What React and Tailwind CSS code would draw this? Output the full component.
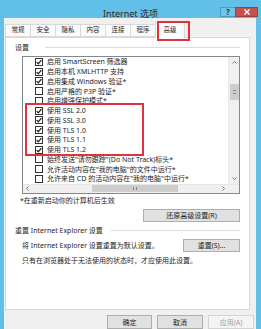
import React from 'react';

const items = [
  { label: '启用 SmartScreen 筛选器', checked: true },
  { label: '启用本机 XMLHTTP 支持', checked: true },
  { label: '启用集成 Windows 验证*', checked: true },
  { label: '启用严格的 P3P 验证*', checked: false },
  { label: '启用增强保护模式*', checked: false },
  { label: '使用 SSL 2.0', checked: true },
  { label: '使用 SSL 3.0', checked: true },
  { label: '使用 TLS 1.0', checked: true },
  { label: '使用 TLS 1.1', checked: true },
  { label: '使用 TLS 1.2', checked: true },
  { label: '始终发送"请勿跟踪"(Do Not Track)标头*', checked: false },
  { label: '允许活动内容在"我的电脑"的文件中运行*', checked: false },
  { label: '允许来自 CD 的活动内容在"我的电脑"中运行*', checked: false },
];

const tabs = ['常规', '安全', '隐私', '内容', '连接', '程序'];

const Checkbox = ({ checked }) => (
  <div className="w-[8px] h-[8px] border border-[#333] bg-white flex items-center justify-center shrink-0">
    {checked && (
      <svg width="6" height="6" viewBox="0 0 6 6">
        <path d="M0.6 3.1 L2.3 4.8 L5.4 1.1" fill="none" stroke="#222" strokeWidth="1.3" />
      </svg>
    )}
  </div>
);

const Arrow = ({ dir }) => {
  const d = {
    up: 'M1.5 4.5 L3.5 2.5 L5.5 4.5',
    down: 'M1.5 2.5 L3.5 4.5 L5.5 2.5',
    left: 'M4.5 1.5 L2.5 3.5 L4.5 5.5',
    right: 'M2.5 1.5 L4.5 3.5 L2.5 5.5',
  }[dir];
  return (
    <svg width="7" height="7" viewBox="0 0 7 7">
      <path d={d} fill="none" stroke="#7a7a7a" strokeWidth="1" />
    </svg>
  );
};

const GroupTitle = ({ children, lineStart }) => (
  <div className="flex items-center h-[8px] pl-[9px] pr-[9px]">
    <span className="text-[7px] leading-none text-[#1e1e1e] whitespace-nowrap">{children}</span>
    <div className={`flex-1 h-px bg-[#d5dfe5] ${lineStart}`}></div>
  </div>
);

const App = () => {
  return (
    <div
      className="w-[261px] h-[329px] bg-[#62bfe7] flex flex-col overflow-hidden"
      style={{ fontFamily: '"Noto Sans", "Noto Sans CJK SC", sans-serif' }}
    >
      {/* title bar */}
      <div className="h-[22px] grid grid-cols-[1fr_auto_1fr]">
        <div></div>
        <div className="pt-[9px] text-[9px] leading-none text-[#2b2b2b] whitespace-nowrap">Internet 选项</div>
        <div className="flex justify-end items-start pt-[7px] pr-[3px]">
          <div className="w-[15px] h-[10px] bg-[#6fc6ea] border border-[#4a9cc4] border-r-0 flex items-center justify-center text-[8px] font-bold leading-none text-[#1d3a4d]">?</div>
          <div className="w-[23px] h-[10px] bg-[#c75050] border border-[#a33c3c] flex items-center justify-center">
            <svg width="6" height="6" viewBox="0 0 6 6">
              <path d="M0.5 0.5 L5.5 5.5 M5.5 0.5 L0.5 5.5" stroke="#fff" strokeWidth="1.4" />
            </svg>
          </div>
        </div>
      </div>

      {/* client area */}
      <div className="flex-1 ml-[4px] w-[252px] bg-[#f0f0f0] flex flex-col pt-[3px]">
        {/* tabs */}
        <div className="flex items-end h-[16px] ml-[1px]">
          {tabs.map((t) => (
            <div
              key={t}
              className="w-[26px] h-[13px] -mr-px border border-[#d9d9d9] bg-[#fbfbfb] flex items-center justify-center text-[6.5px] leading-none text-[#1e1e1e]"
            >
              {t}
            </div>
          ))}
          <div className="relative z-10 w-[30px] h-[16px] -mb-px border border-[#d9d9d9] border-b-0 bg-white flex items-center justify-center text-[6.5px] leading-none text-[#1e1e1e] pb-[1px]">
            高级
            <div className="absolute left-[1px] -top-[2px] w-[33px] h-[20px] border-2 border-[#e2303c]"></div>
          </div>
        </div>

        {/* tab panel */}
        <div className="ml-[1px] w-[245px] h-[273px] border border-[#d9d9d9] bg-white flex flex-col pt-[5px]">
          <GroupTitle lineStart="ml-[16px]">设置</GroupTitle>

          {/* list box */}
          <div className="relative mt-[5px] ml-[16px] w-[218px] border border-[#828790] bg-white flex flex-col">
            <div className="flex">
              <div className="flex-1 flex flex-col overflow-hidden">
                {items.map((it) => (
                  <div key={it.label} className="h-[9.75px] flex items-center pl-[12px] gap-[4px]">
                    <Checkbox checked={it.checked} />
                    <span className="text-[7px] leading-none text-[#1e1e1e] whitespace-nowrap">{it.label}</span>
                  </div>
                ))}
              </div>
              {/* vertical scrollbar */}
              <div className="w-[11px] bg-[#f0f0f0] border-l border-[#e6e6e6] flex flex-col items-center">
                <div className="h-[10px] flex items-center"><Arrow dir="up" /></div>
                <div className="mt-[17px] w-[9px] h-[16px] bg-[#cdcdcd] flex items-center justify-center">
                  <div className="w-[3px] h-[4px] border-y border-[#888]"></div>
                </div>
                <div className="flex-1"></div>
                <div className="h-[10px] flex items-center"><Arrow dir="down" /></div>
              </div>
            </div>
            {/* horizontal scrollbar */}
            <div className="h-[9px] flex bg-[#f0f0f0] border-t border-[#e6e6e6]">
              <div className="w-[9px] flex items-center justify-center"><Arrow dir="left" /></div>
              <div className="flex-1 flex items-center pl-[60px]">
                <div className="w-[86px] h-[7px] bg-[#cdcdcd] flex items-center justify-center">
                  <div className="w-[4px] h-[3px] border-x border-[#888]"></div>
                </div>
              </div>
              <div className="w-[9px] flex items-center justify-center"><Arrow dir="right" /></div>
              <div className="w-[11px] bg-[#f0f0f0]"></div>
            </div>
            {/* highlight frame */}
            <div className="absolute left-[2px] top-[46px] w-[119px] h-[53px] border-2 border-[#e2303c]"></div>
          </div>

          <div className="mt-[3px] ml-[14px] h-[8px] flex items-center text-[7px] leading-none text-[#1e1e1e]">
            *在重新启动你的计算机后生效
          </div>

          <div className="mt-[4px] self-end mr-[9px] w-[97px] h-[13px] bg-[#e1e1e1] border border-[#adadad] flex items-center justify-center text-[7px] leading-none text-[#1e1e1e]">
            还原高级设置(R)
          </div>

          <div className="mt-[5px]">
            <GroupTitle lineStart="ml-[8px]">重置 Internet Explorer 设置</GroupTitle>
          </div>

          <div className="mt-[4px] flex items-center justify-between pl-[16px] pr-[9px]">
            <span className="text-[7px] leading-none text-[#1e1e1e] whitespace-nowrap">将 Internet Explorer 设置重置为默认设置。</span>
            <div className="w-[57px] h-[13px] bg-[#e1e1e1] border border-[#adadad] flex items-center justify-center text-[7px] leading-none text-[#1e1e1e]">
              重置(S)...
            </div>
          </div>

          <div className="mt-[5px] pl-[16px] h-[8px] flex items-center text-[7px] leading-none text-[#1e1e1e] whitespace-nowrap">
            只有在浏览器处于无法使用的状态时，才应使用此设置。
          </div>
        </div>

        {/* dialog buttons */}
        <div className="mt-[5px] flex justify-end gap-[5px] pr-[2px]">
          <div className="w-[45px] h-[14px] bg-[#e1e1e1] border border-[#adadad] flex items-center justify-center text-[7px] leading-none text-[#1e1e1e]">确定</div>
          <div className="w-[46px] h-[14px] bg-[#e1e1e1] border border-[#adadad] flex items-center justify-center text-[7px] leading-none text-[#1e1e1e]">取消</div>
          <div className="w-[46px] h-[14px] bg-[#f4f4f4] border border-[#d4d4d4] flex items-center justify-center text-[7px] leading-none text-[#a0a0a0]">应用(A)</div>
        </div>
      </div>
    </div>
  );
};

export default App;
